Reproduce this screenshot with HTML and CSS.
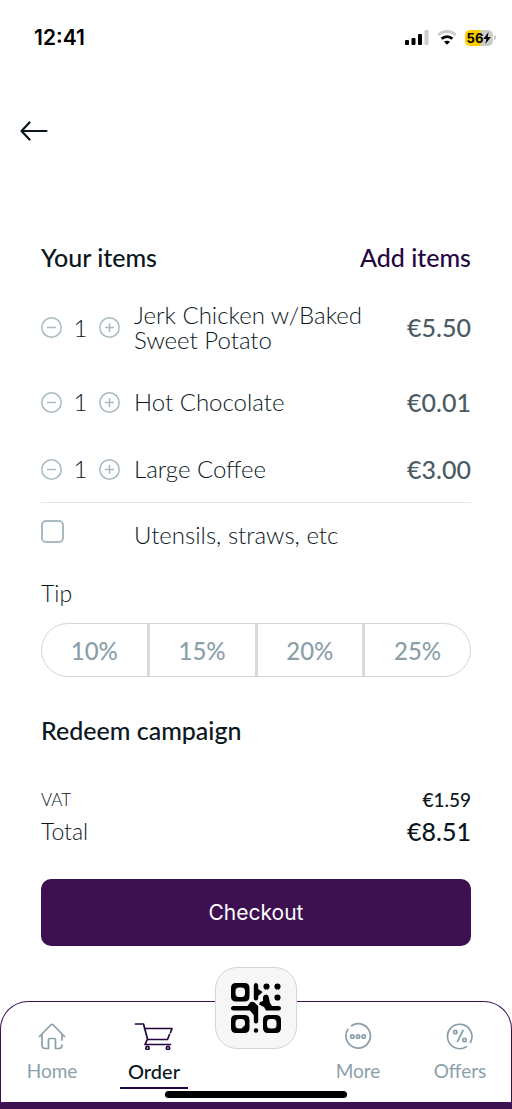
FILE: index.html
```html
<!DOCTYPE html>
<html lang="en">
<head>
<meta charset="utf-8">
<meta name="viewport" content="width=device-width, initial-scale=1">
<title>Your order</title>
<link rel="stylesheet" href="styles.css">
</head>
<body>
<div class="status">
  <span class="clock">12:41</span>
  <div class="status-icons">
    <svg width="24" height="16" viewBox="0 0 24 16" aria-hidden="true">
      <rect x="0" y="10" width="4" height="5" rx="1"/><rect x="6.500" y="8" width="4" height="7" rx="1"/><rect x="13" y="4" width="4" height="11" rx="1"/><rect x="19.500" y="0" width="4" height="15" rx="1" fill="#ccc"/>
    </svg>
    <svg width="20" height="16" viewBox="0 0 20 16" aria-hidden="true">
      <path d="M1.300 5.200C6.200.4 13.800.4 18.700 5.200" fill="none" stroke="#ccc" stroke-width="3"/>
      <path d="M4.600 8.800C7.700 5.800 12.300 5.800 15.400 8.800" fill="none" stroke="#000" stroke-width="2.800"/>
      <path d="M7 11.700C8.800 10.300 11.200 10.300 13 11.700L10 14.800Z"/>
    </svg>
    <div class="battery"><span>56</span><svg width="8" height="12" viewBox="0 0 8 12" aria-hidden="true"><path d="M5.600 0 .3 7H3.400L2.400 12 7.800 5H4.700Z"/></svg></div>
  </div>
</div>

<header class="topbar">
  <button class="back" type="button" aria-label="Back">
    <svg width="28" height="20" viewBox="0 0 28 20" fill="none" stroke="#0b171e" stroke-width="2.200" stroke-linecap="round" stroke-linejoin="round"><path d="M9.500 1.500 1.500 10l8 8.500M1.500 10h25"/></svg>
  </button>
</header>

<main class="content">
  <div class="heading-row">
    <h1 class="heading">Your items</h1>
    <a class="heading add" href="#menu">Add items</a>
  </div>

  <ul class="items">
    <li class="item">
      <div class="stepper">
        <button type="button" aria-label="Remove one Jerk Chicken"><svg viewBox="0 0 22 22"><circle cx="10.500" cy="11.500" r="9.700"/><path d="M6 11.500h9"/></svg></button>
        <span>1</span>
        <button type="button" aria-label="Add one Jerk Chicken"><svg viewBox="0 0 22 22"><circle cx="11.500" cy="11.500" r="9.700"/><path d="M7 11.500h9M11.500 7v9"/></svg></button>
      </div>
      <span class="name">Jerk Chicken w/Baked Sweet Potato</span>
      <span class="price">€5.50</span>
    </li>
    <li class="item">
      <div class="stepper">
        <button type="button" aria-label="Remove one Hot Chocolate"><svg viewBox="0 0 22 22"><circle cx="10.500" cy="11.500" r="9.700"/><path d="M6 11.500h9"/></svg></button>
        <span>1</span>
        <button type="button" aria-label="Add one Hot Chocolate"><svg viewBox="0 0 22 22"><circle cx="11.500" cy="11.500" r="9.700"/><path d="M7 11.500h9M11.500 7v9"/></svg></button>
      </div>
      <span class="name">Hot Chocolate</span>
      <span class="price">€0.01</span>
    </li>
    <li class="item">
      <div class="stepper">
        <button type="button" aria-label="Remove one Large Coffee"><svg viewBox="0 0 22 22"><circle cx="10.500" cy="11.500" r="9.700"/><path d="M6 11.500h9"/></svg></button>
        <span>1</span>
        <button type="button" aria-label="Add one Large Coffee"><svg viewBox="0 0 22 22"><circle cx="11.500" cy="11.500" r="9.700"/><path d="M7 11.500h9M11.500 7v9"/></svg></button>
      </div>
      <span class="name">Large Coffee</span>
      <span class="price">€3.00</span>
    </li>
  </ul>

  <div class="extras">
    <input class="check" type="checkbox" id="utensils">
    <label class="name" for="utensils">Utensils, straws, etc</label>
  </div>

  <h2 class="tip-title" id="tip-title">Tip</h2>
  <div class="tips" role="group" aria-labelledby="tip-title">
    <button type="button">10%</button>
    <button type="button">15%</button>
    <button type="button">20%</button>
    <button type="button">25%</button>
  </div>

  <h2 class="heading redeem">Redeem campaign</h2>

  <dl class="totals">
    <div class="vat"><dt>VAT</dt><dd>€1.59</dd></div>
    <div class="total"><dt>Total</dt><dd>€8.51</dd></div>
  </dl>

  <button class="checkout" type="button">Checkout</button>
</main>

<footer class="dock">
  <nav class="nav">
    <a class="tab" href="#home">
      <svg width="28" height="28" viewBox="0 0 28 28"><path d="M1.500 14.500 12.700 3Q14 1.800 15.300 3L26.500 14.500M4 12.500V23q0 3.500 3.500 3.500H10.500V17.500q0-1 1-1h5q1 0 1 1v9H21q3 0 3-3.500M24 12.500V18"/></svg>
      <span>Home</span>
    </a>
    <a class="tab active" href="#order" aria-current="page">
      <svg width="40" height="28" viewBox="0 0 40 28"><path d="M1.500 2h8l4 15-2.500 5.500H36.500M10.500 6.500H38L36.500 10.500M35.500 12.500 33.500 17.500H13.500"/><circle cx="13.500" cy="26" r="1.600"/><circle cx="34" cy="26" r="1.600"/></svg>
      <span>Order</span>
    </a>
    <div class="scan-slot">
      <button class="scan" type="button" aria-label="Scan QR code">
        <svg width="50" height="50" viewBox="0 0 50 50">
          <path fill-rule="evenodd" d="M5 0h8.500q5 0 5 5v8.500q0 5-5 5H5q-5 0-5-5V5q0-5 5-5ZM8 4.500Q4.500 4.500 4.500 8v2.500q0 3.500 3.500 3.500h2.500q3.500 0 3.500-3.500V8q0-3.500-3.500-3.500ZM5 32h8.500q5 0 5 5v8q0 5-5 5H5q-5 0-5-5v-8q0-5 5-5ZM8 36Q4.500 36 4.500 39.500V42q0 3.500 3.500 3.500h2.500L14 42v-2.500q0-3.500-3.500-3.500ZM37 32h8q5 0 5 5v8q0 5-5 5h-8q-5 0-5-5v-8q0-5 5-5ZM39.500 36q-3.500 0-3.500 3.500V42q0 3.500 3.500 3.500H42q3.500 0 3.500-3.500v-2.500q0-3.500-3.500-3.500Z"/>
          <path d="M25 0q2.200 0 2.200 2.500V6l4.500 3-4.500 4v2.500q0 2-2.200 2t-2.200-2V2.500Q22.800 0 25 0ZM2 23h14.500l3-4q3-1 4.500 1l3.200 3V38q0 2.500-2.200 2.500T22.800 38v-6l-4-4.500H2q-2.200-1-2.200-2.300T2 23ZM35 11.500q2.500 0 2.800 2.500L39 20l2 3h7q2 .5 2 2.300T48 27.500H35L33 24l-5-2.500 1-2.500 3-1V14Q32.500 11.500 35 11.500Z"/>
          <circle cx="35.500" cy="3.500" r="3.100"/><circle cx="46.500" cy="3.500" r="3.100"/><circle cx="46.500" cy="14.500" r="3.100"/><circle cx="25" cy="47.500" r="2.200"/>
        </svg>
      </button>
    </div>
    <a class="tab" href="#more">
      <svg width="28" height="28" viewBox="0 0 28 28"><path d="M7.500 3.700A12.200 12.200 0 1 1 3.800 7.500"/><circle cx="8.300" cy="14.500" r="1.700"/><circle cx="14" cy="14.500" r="1.700"/><circle cx="19.700" cy="14.500" r="1.700"/></svg>
      <span>More</span>
    </a>
    <a class="tab" href="#offers">
      <svg width="28" height="28" viewBox="0 0 28 28"><path d="M20.500 24.600A12.200 12.200 0 1 1 24.300 20.500M17 8.500 11.500 19.500"/><circle cx="9.300" cy="10" r="1.700"/><circle cx="18.500" cy="18" r="1.700"/></svg>
      <span>Offers</span>
    </a>
  </nav>
  <div class="home-indicator"></div>
</footer>
</body>
</html>
```
FILE: styles.css
```css
* { box-sizing: border-box; }

body {
  margin: 0;
  min-height: 100vh;
  display: flex;
  flex-direction: column;
  background: #fff;
  color: #0b171e;
  font-family: Lato, "Liberation Sans", sans-serif;
}

button { font: inherit; color: inherit; padding: 0; border: 0; background: none; }
a { text-decoration: none; }
svg { display: block; flex: none; }
h1, h2, dl, dd, ul { margin: 0; padding: 0; }

.status {
  height: 75px;
  padding: 0 16px 0 34px;
  display: flex;
  align-items: center;
  justify-content: space-between;
  color: #000;
  font-family: Inter, sans-serif;
}
.clock { font-size: 21px; font-weight: 600; }
.status-icons { display: flex; align-items: center; gap: 8px; }
.battery {
  position: relative;
  width: 28px;
  height: 16px;
  margin-right: 3px;
  border-radius: 5px;
  display: flex;
  align-items: center;
  justify-content: center;
  background: linear-gradient(90deg, #fc0 56%, #ccc 56%);
  font-size: 13px;
  font-weight: 700;
}
.battery::after {
  content: "";
  position: absolute;
  left: 100%;
  width: 2px;
  height: 5px;
  margin-left: 1px;
  border-radius: 0 2px 2px 0;
  background: #ccc;
}

.topbar { padding: 32px 20px; }
.back { display: flex; align-items: center; height: 48px; }

.content {
  flex: 1;
  padding: 56px 41px 0;
  display: flex;
  flex-direction: column;
}
.heading-row { display: flex; justify-content: space-between; }
.heading { font-size: 25px; line-height: 28px; font-weight: 500; }
.add { color: #25053f; }

.items {
  list-style: none;
  display: flex;
  flex-direction: column;
  gap: 32px;
  margin-top: 31px;
  padding-bottom: 16px;
  border-bottom: 1px solid #e4e7e8;
}
.item {
  display: grid;
  grid-template-columns: 79px 1fr auto;
  column-gap: 14px;
  align-items: center;
  min-height: 35px;
}
.stepper {
  display: flex;
  align-items: center;
  justify-content: space-between;
  font-size: 24px;
  font-weight: 300;
  line-height: 25px;
}
.stepper svg { width: 22px; height: 22px; fill: none; stroke: #a9bac2; stroke-width: 1.5; }
.name { font-size: 24px; line-height: 25px; font-weight: 300; }
.price { font-size: 25px; line-height: 28px; font-weight: 500; color: #4a5b64; }

.extras {
  display: grid;
  grid-template-columns: 79px 1fr;
  column-gap: 14px;
  margin-top: 17px;
}
.extras .name { padding-top: 2px; }
.check {
  appearance: none;
  width: 23px;
  height: 23px;
  margin: 0;
  border: 2px solid #a9bac2;
  border-radius: 5px;
}

.tip-title { margin-top: 34px; font-size: 23px; line-height: 25px; font-weight: 300; }
.tips {
  display: flex;
  height: 54px;
  margin-top: 17px;
  border: 1px solid #d3d5d6;
  border-radius: 27px;
}
.tips button { flex: 1; color: #8a9fa9; font-size: 24px; font-weight: 500; }
.tips button + button { border-left: 3px solid #d8d9da; }

.redeem { margin-top: 39px; }

.totals { margin-top: 44px; }
.totals div { display: flex; justify-content: space-between; align-items: center; }
.vat { font-size: 17px; line-height: 24px; font-weight: 300; }
.vat dd { font-size: 19px; font-weight: 500; }
.total { margin-top: 3px; font-size: 23px; line-height: 32px; font-weight: 300; }
.total dd { font-size: 25px; font-weight: 500; }

.checkout {
  height: 67px;
  margin-top: 32px;
  border-radius: 10px;
  background: #3d1052;
  color: #fff;
  font-family: Inter, sans-serif;
  font-size: 21px;
}

.dock { position: relative; padding-bottom: 7px; background: linear-gradient(#fff 50%, #3d1052 50%); }
.nav {
  display: grid;
  grid-template-columns: repeat(5, 1fr);
  height: 101px;
  border: 1px solid #3d1052;
  border-bottom: 0;
  border-radius: 28px 28px 0 0;
  background: #fff;
}
.tab {
  justify-self: center;
  align-self: start;
  display: flex;
  flex-direction: column;
  align-items: center;
  gap: 9px;
  margin-top: 20px;
  color: #8a9fa9;
  font-size: 19px;
  line-height: 24px;
}
.tab svg { fill: none; stroke: currentColor; stroke-width: 1.7; stroke-linecap: round; stroke-linejoin: round; }
.active { color: #25053f; }
.active span {
  padding: 0 8px 4px;
  border-bottom: 2px solid #25053f;
  color: #0b171e;
  font-size: 20px;
  font-weight: 500;
}
.scan-slot { position: relative; }
.scan {
  position: absolute;
  top: -35px;
  left: 50%;
  width: 82px;
  height: 82px;
  margin-left: -41px;
  display: grid;
  place-items: center;
  border: 1px solid #cfd7db;
  border-radius: 22px;
  background: #f6f6f7;
}
.home-indicator {
  position: absolute;
  bottom: 11px;
  left: 50%;
  width: 182px;
  height: 7px;
  margin-left: -91px;
  border-radius: 4px;
  background: #000;
}
```
